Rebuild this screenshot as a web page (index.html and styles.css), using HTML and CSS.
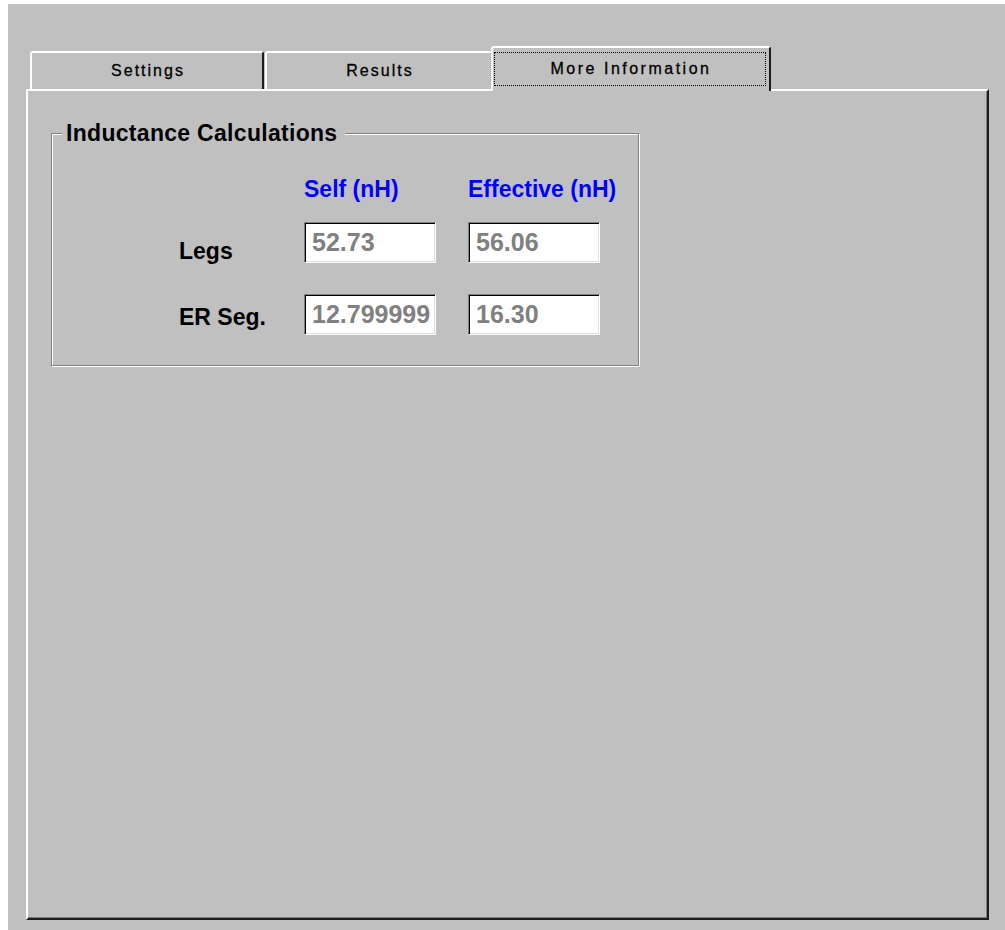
FILE: index.html
```html
<!DOCTYPE html>
<html lang="en">
<head>
<meta charset="utf-8">
<title>Inductance</title>
<link rel="stylesheet" href="styles.css">
</head>
<body>
<div class="window">
  <div class="tabstrip">
    <div class="tab tab-settings">Settings</div>
    <div class="tab tab-results">Results</div>
    <div class="tab tab-active"><span class="focus">More Information</span></div>
  </div>
  <div class="panel">
    <fieldset class="group">
      <legend>Inductance Calculations</legend>
      <div class="grid">
        <span class="corner"></span>
        <span class="head">Self (nH)</span>
        <span class="head">Effective (nH)</span>

        <span class="label label-legs">Legs</span>
        <input class="field" type="text" value="52.73" readonly>
        <input class="field" type="text" value="56.06" readonly>

        <span class="label label-er">ER Seg.</span>
        <input class="field" type="text" value="12.799999" readonly>
        <input class="field" type="text" value="16.30" readonly>
      </div>
    </fieldset>
  </div>
</div>
</body>
</html>
```
FILE: styles.css
```css
html, body {
  margin: 0;
  background: #fff;
}

body {
  padding: 4px 0 0 8px;
  font-family: "Liberation Sans", Arial, sans-serif;
  color: #000;
}

/* dialog surface */
.window {
  box-sizing: border-box;
  height: 926px;
  background: #c0c0c0;
  padding: 42px 16px 10px 18px;
  display: flex;
  flex-direction: column;
}

/* tab headers */
.tabstrip {
  display: flex;
  align-items: flex-end;
  height: 43px;
  padding-left: 4px;
  position: relative;
  z-index: 1;
}

.tab {
  box-sizing: border-box;
  height: 38px;
  display: flex;
  align-items: center;
  justify-content: center;
  background: #c0c0c0;
  border-top: 2px solid #fff;
  border-left: 2px solid #fff;
  border-right: 2px solid #1c1c1c;
  border-radius: 3px 3px 0 0;
  font-size: 16px;
  letter-spacing: 2px;
  padding-left: 2px;
  color: #000;
  -webkit-text-stroke: 0.3px #000;
}

.tab-settings {
  width: 234px;
  margin-right: 1px;
}

.tab-results {
  width: 228px;
}

.tab-active {
  width: 280px;
  height: 45px;
  margin-left: -2px;
  margin-bottom: -2px;
  align-items: stretch;
  padding: 4px 3px 5px 1px;
  position: relative;
}

.focus {
  flex: 1;
  display: flex;
  align-items: center;
  justify-content: center;
  border: 1px dotted #000;
  letter-spacing: 2.5px;
  padding-left: 2px;
}

/* tab page */
.panel {
  flex: 1;
  background: #c0c0c0;
  border-top: 2px solid #fff;
  border-left: 2px solid #fff;
  border-right: 2px solid #1c1c1c;
  border-bottom: 2px solid #1c1c1c;
  box-shadow: inset -1px -1px 0 #808080;
}

/* etched group box */
.group {
  box-sizing: border-box;
  width: 588px;
  min-inline-size: 0;
  margin: 29px 0 0 23px;
  padding: 0;
  border: 1px solid #808080;
  box-shadow: inset 1px 1px 0 #fff, 1px 1px 0 #fff;
}

.group legend {
  margin-left: 10px;
  padding: 0 8px 0 4px;
  background: #c0c0c0;
  font-size: 23px;
  font-weight: bold;
  line-height: 26px;
  letter-spacing: 0.3px;
}

.grid {
  display: grid;
  grid-template-columns: 93px 132px 132px;
  grid-template-rows: 46px 72px 41px;
  column-gap: 32px;
  padding: 30px 0 30px 127px;
}

.head {
  align-self: start;
  color: #0000ff;
  font-size: 23px;
  font-weight: bold;
  line-height: 26px;
  white-space: nowrap;
}

.label {
  align-self: start;
  font-size: 23px;
  font-weight: bold;
  line-height: 26px;
  white-space: nowrap;
}

.label-legs {
  margin-top: 16px;
}

.label-er {
  margin-top: 10px;
}

/* sunken read-only edit boxes */
.field {
  align-self: start;
  box-sizing: border-box;
  width: 132px;
  height: 41px;
  margin: 0;
  padding: 0 0 0 7px;
  border: 1px solid;
  border-color: #808080 #fff #fff #808080;
  box-shadow: inset 1px 1px 0 #000, inset -1px -1px 0 #dfdfdf;
  background: #fff;
  color: #808080;
  font-family: "Liberation Sans", Arial, sans-serif;
  font-size: 25px;
  font-weight: bold;
  outline: none;
}
```
